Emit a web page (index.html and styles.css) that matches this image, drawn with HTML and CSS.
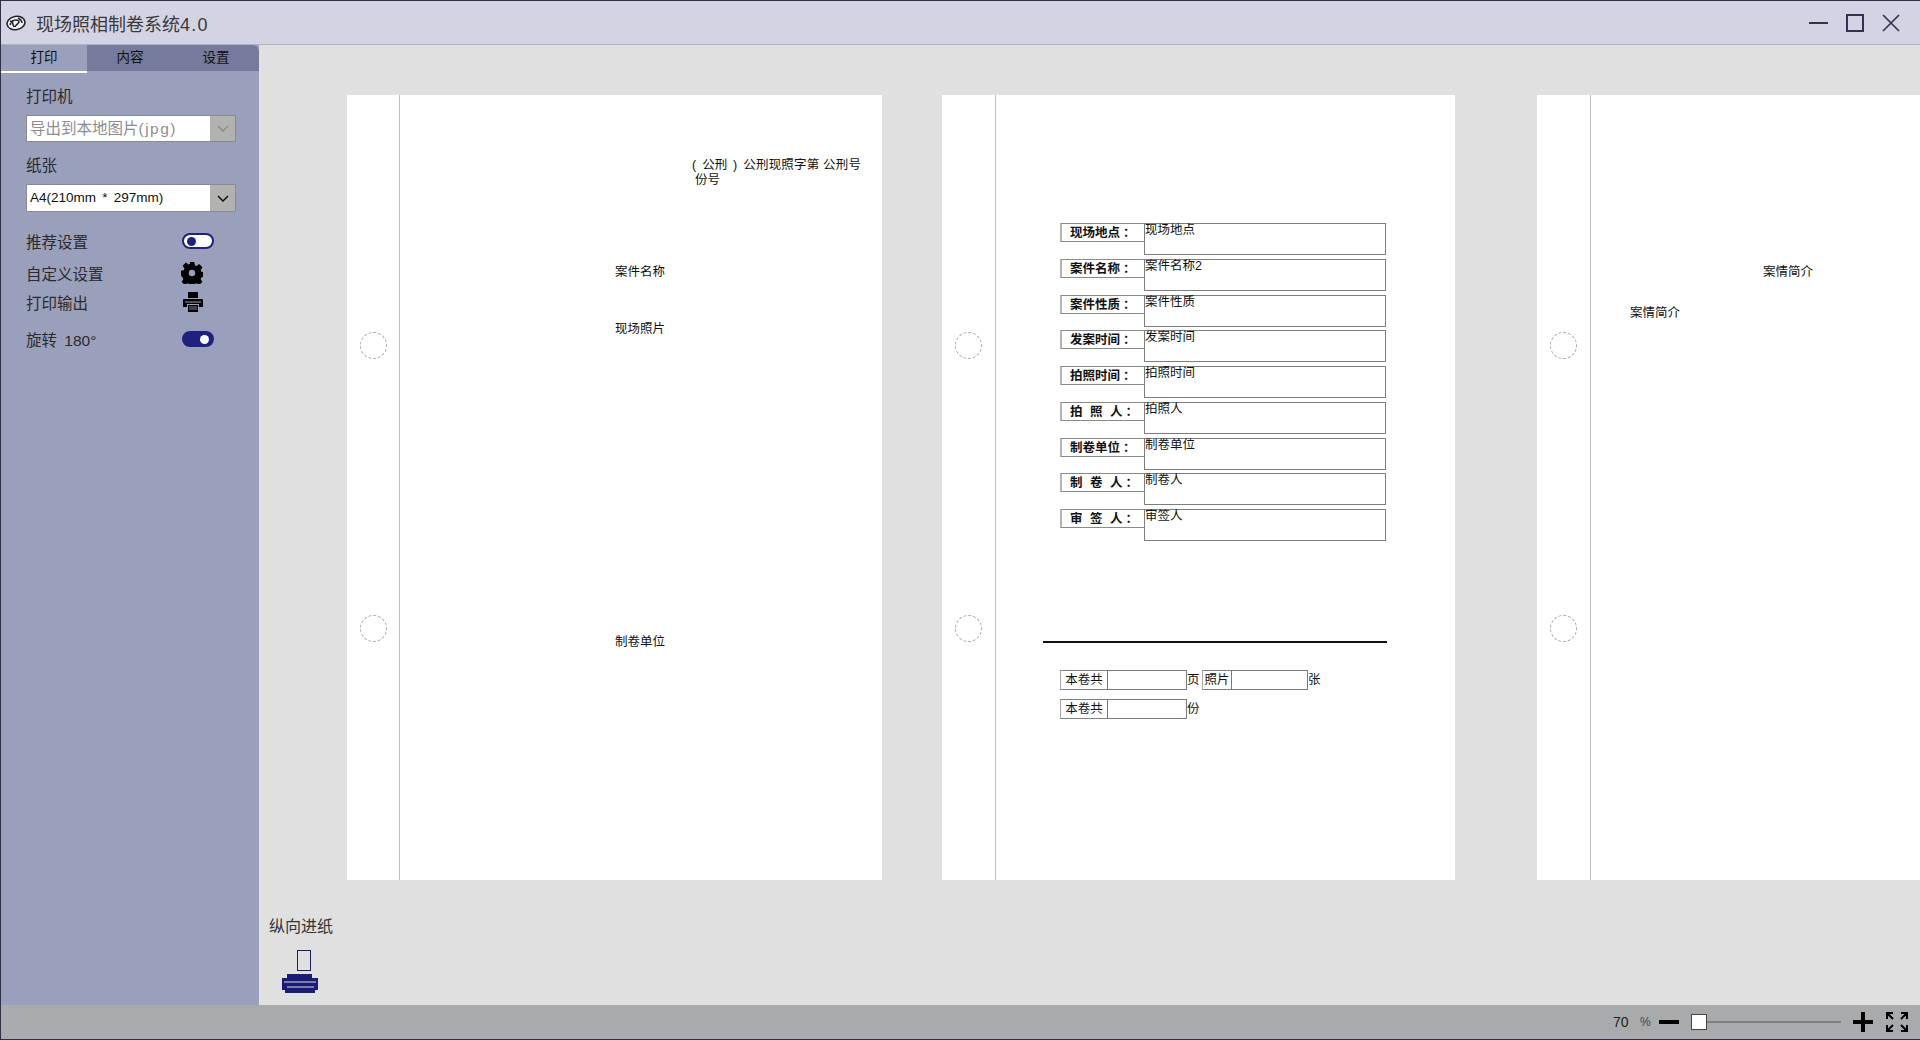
FILE: index.html
```html
<!DOCTYPE html>
<html lang="zh-CN">
<head>
<meta charset="utf-8">
<title>现场照相制卷系统4.0</title>
<link rel="stylesheet" href="styles.css">
</head>
<body>
<div class="window">
  <header class="titlebar">
    <svg class="logo" viewBox="0 0 20 16" width="20" height="16"><ellipse cx="10" cy="8" rx="9" ry="6.6" fill="#f4f4f8" stroke="#23232f" stroke-width="1.6" transform="rotate(-10 10 8)"/><path d="M4 10c1-5 6-6 9-4 1 2-3 3-4 6M12 3c2 1 4 2 4 5M7 5c-1 2 0 5 1 7M4 6l3 1" fill="none" stroke="#23232f" stroke-width="1.500"/></svg>
    <span class="app-title">现场照相制卷系统<span class="version">4.0</span></span>
    <div class="win-controls">
      <svg viewBox="0 0 19 18" width="19" height="18"><path d="M0 9h19" stroke="#33334f" stroke-width="2"/></svg>
      <svg viewBox="0 0 18 18" width="18" height="18"><rect x="1" y="1" width="16" height="16" fill="none" stroke="#33334f" stroke-width="2"/></svg>
      <svg viewBox="0 0 18 18" width="18" height="18"><path d="M1 1l16 16M17 1L1 17" stroke="#33334f" stroke-width="1.7"/></svg>
    </div>
  </header>
  <div class="content">
    <aside class="sidebar">
      <nav class="tabs">
        <div class="tab active">打印</div>
        <div class="tab">内容</div>
        <div class="tab last">设置</div>
      </nav>
      <div class="panel">
        <div class="field-label">打印机</div>
        <div class="combo disabled"><span class="combo-text">导出到本地图片<span class="ext">(jpg)</span></span><span class="combo-btn"><svg viewBox="0 0 12 7" width="12" height="7"><path d="M1 1l5 5 5-5" fill="none" stroke="#8a8a8a" stroke-width="1.3"/></svg></span></div>
        <div class="field-label second">纸张</div>
        <div class="combo"><span class="combo-text paper">A4(210mm * 297mm)</span><span class="combo-btn"><svg viewBox="0 0 12 7" width="12" height="7"><path d="M1 1l5 5 5-5" fill="none" stroke="#111" stroke-width="1.5"/></svg></span></div>
        <div class="opt first-opt"><span>推荐设置</span><span class="toggle off"><i></i></span></div>
        <div class="opt gear-opt"><span>自定义设置</span>
          <svg class="opt-icon" viewBox="0 0 24 24" width="22" height="22"><path fill="#000" fill-rule="evenodd" d="M9.500 0h5l.6 3.500 1.900.8 2.900-2 3.500 3.500-2 2.900.8 1.900 3.500.6v5l-3.500.6-.8 1.900 2 2.900-3.500 3.500-2.900-2-1.900.8-.6 3.500h-5l-.6-3.500-1.900-.8-2.900 2-3.500-3.500 2-2.900-.8-1.900L-.5 14.500v-5l3.500-.6.8-1.900-2-2.900 3.500-3.500 2.900 2 1.900-.8zM12 8.500a3.500 3.500 0 1 0 0 7 3.500 3.500 0 0 0 0-7z"/></svg>
        </div>
        <div class="opt print-opt"><span>打印输出</span>
          <svg class="opt-icon" viewBox="0 0 20 20" width="20" height="20"><path fill="#000" d="M5 0h10v6h-10zM1 7h18q1 0 1 1v7h-4v-3H4v3H0V8q0-1 1-1zM5 13h10v7H5z"/><path d="M2 10h16" stroke="#9a9fbc" stroke-width="1"/><path d="M6 15h8M6 17h8" stroke="#9a9fbc" stroke-width=".8"/></svg>
        </div>
        <div class="opt rotate-opt"><span>旋转 180°</span><span class="toggle on"><i></i></span></div>
      </div>
    </aside>
    <main class="main">
      <div class="canvas">
        <section class="page page-one">
          <div class="spine"><span class="hole"></span><span class="hole hole-two"></span></div>
          <div class="sheet">
            <div class="docno"><span class="wide">(&nbsp;公刑&nbsp;)&nbsp;</span><span class="fine">公刑现照字第 公刑号</span></div>
            <div class="docno indent">份号</div>
            <div class="cover-item item-name">案件名称</div>
            <div class="cover-item item-photo">现场照片</div>
            <div class="cover-item item-unit">制卷单位</div>
          </div>
        </section>
        <section class="page page-two">
          <div class="spine"><span class="hole"></span><span class="hole hole-two"></span></div>
          <div class="sheet">
            <div class="form">
              <div class="row"><div class="key">现场地点<span class="colon">：</span></div><div class="val">现场地点</div></div>
              <div class="row"><div class="key">案件名称<span class="colon">：</span></div><div class="val">案件名称2</div></div>
              <div class="row"><div class="key">案件性质<span class="colon">：</span></div><div class="val">案件性质</div></div>
              <div class="row"><div class="key">发案时间<span class="colon">：</span></div><div class="val">发案时间</div></div>
              <div class="row"><div class="key">拍照时间<span class="colon">：</span></div><div class="val">拍照时间</div></div>
              <div class="row"><div class="key"><span class="spaced">拍照</span>人<span class="colon">：</span></div><div class="val">拍照人</div></div>
              <div class="row"><div class="key">制卷单位<span class="colon">：</span></div><div class="val">制卷单位</div></div>
              <div class="row"><div class="key"><span class="spaced">制卷</span>人<span class="colon">：</span></div><div class="val">制卷人</div></div>
              <div class="row"><div class="key"><span class="spaced">审签</span>人<span class="colon">：</span></div><div class="val">审签人</div></div>
            </div>
            <hr class="rule">
            <div class="tally">
              <div class="cell-key">本卷共</div><div class="cell-val"></div><span class="unit">页</span>
              <div class="cell-key narrow">照片</div><div class="cell-val short"></div><span class="unit">张</span>
            </div>
            <div class="tally tally-two">
              <div class="cell-key">本卷共</div><div class="cell-val"></div><span class="unit">份</span>
            </div>
          </div>
        </section>
        <section class="page page-three">
          <div class="spine"><span class="hole"></span><span class="hole hole-two"></span></div>
          <div class="sheet">
            <div class="brief-title">案情简介</div>
            <div class="brief-body">案情简介</div>
          </div>
        </section>
      </div>
      <div class="feed">
        <div class="feed-label">纵向进纸</div>
        <svg class="feed-icon" viewBox="0 0 36 44" width="36" height="44"><rect x="15.500" y="0.500" width="13" height="20" fill="none" stroke="#1b1b78"/><path fill="#1b1b78" d="M5 24h25v4h6v12h-3v3H3v-3H0V28h5z"/><path d="M2 32h32M5 37h27" stroke="#e0e0e0" stroke-width="1"/></svg>
      </div>
    </main>
  </div>
  <footer class="statusbar">
    <span class="zoom-val">70</span><span class="zoom-pct">%</span>
    <svg class="minus" viewBox="0 0 20 4" width="20" height="4"><rect width="20" height="4" fill="#000"/></svg>
    <div class="slider"><span class="thumb"></span><span class="track"></span></div>
    <svg class="plus" viewBox="0 0 20 20" width="20" height="20"><path d="M0 10h20M10 0v20" stroke="#000" stroke-width="4"/></svg>
    <svg class="full" viewBox="0 0 22 20" width="22" height="20"><path d="M1 7V1h6M15 1h6v6M21 13v6h-6M7 19H1v-6M2 2l5 5M20 2l-5 5M20 18l-5-5M2 18l5-5" fill="none" stroke="#000" stroke-width="2"/></svg>
  </footer>
</div>
</body>
</html>
```
FILE: styles.css
```css
* { box-sizing: border-box; }
html, body { margin: 0; padding: 0; height: 100%; overflow: hidden; }
body { font-family: "Liberation Sans", "Noto Sans CJK SC", sans-serif; color: #000; }
.window { width: 1920px; height: 1040px; display: flex; flex-direction: column; border-top: 1px solid #2f2f45; border-left: 1px solid #2f2f45; border-bottom: 1px solid #2f2f45; overflow: hidden; }
.titlebar { height: 44px; flex: none; display: flex; align-items: center; background: #d3d3e3; border-bottom: 1px solid #b4b4c0; padding-left: 5px; }
.logo { flex: none; }
.app-title { margin-left: 10px; font-size: 18px; color: #3a3a3a; }
.version { letter-spacing: 1.300px; }
.win-controls { margin-left: auto; display: flex; align-items: center; gap: 18px; padding-right: 20px; }
.content { flex: 1; display: flex; min-height: 0; }
.sidebar { width: 258px; flex: none; background: #9a9fbc; }
.tabs { display: flex; height: 28px; background: #9a9fbc; }
.tab { width: 86px; height: 26px; background: #767a9c; font-size: 13.500px; line-height: 26px; text-align: center; color: #111; }
.tab.active { background: #9a9fbc; height: 28px; box-shadow: inset 0 -2px 0 #fff; }
.tab.last { border-top-right-radius: 7px; }
.panel { padding: 0 22px 0 25px; }
.field-label { font-size: 15.500px; line-height: 20px; color: #2b2b2b; margin-top: 14px; }
.combo { display: flex; width: 210px; height: 28px; margin-top: 8px; background: #fff; border: 1px solid #8a8a8f; font-size: 15.500px; }
.combo.disabled { height: 27px; }
.combo-text { flex: 1; padding-left: 3px; line-height: 25px; white-space: nowrap; color: #111; }
.combo-text.paper { font-size: 13.500px; word-spacing: 2.500px; }
.ext { letter-spacing: 1.500px; }
.combo.disabled .combo-text { color: #8d8d8d; }
.combo-btn { width: 25px; background: #b2b2b0; display: flex; align-items: center; justify-content: center; }
.opt { display: flex; align-items: center; justify-content: space-between; font-size: 15.500px; color: #2b2b2b; height: 20px; width: 188px; }
.opt.first-opt { margin-top: 19px; }
.opt.gear-opt { margin-top: 12px; }
.opt.print-opt { margin-top: 9px; }
.opt.rotate-opt { margin-top: 17px; word-spacing: 3px; }
.opt-icon { margin-right: 11px; }
.toggle { width: 32px; height: 16px; border-radius: 8px; display: flex; align-items: center; padding: 0 3px; border: 2px solid #1f2080; }
.toggle i { width: 9px; height: 9px; border-radius: 50%; display: block; }
.toggle.off { background: #fff; }
.toggle.off i { background: #1f2080; }
.toggle.on { background: #1f2080; justify-content: flex-end; }
.toggle.on i { background: #fff; }
.main { flex: 1; min-width: 0; background: #e0e0e0; display: flex; flex-direction: column; }
.canvas { height: 845px; flex: none; display: flex; align-items: flex-start; padding: 50px 0 0 88px; overflow: hidden; }
.page { height: 785px; flex: none; background: #fff; display: flex; font-size: 12.500px; line-height: 15px; color: #111; }
.page-one { width: 535px; margin-right: 60px; }
.page-two { width: 513px; margin-right: 82px; margin-left: 0; }
.page-three { width: 535px; }
.spine { width: 53px; flex: none; border-right: 1px solid #bdbdbd; display: flex; flex-direction: column; align-items: center; padding: 237px 0 0 1px; }
.page-two .spine, .page-three .spine { width: 54px; padding-left: 0; }
.hole { width: 27px; height: 27px; border-radius: 50%; border: 1px dashed #a8a8a8; display: block; }
.hole-two { margin-top: 256px; }
.sheet { flex: 1; min-width: 0; }
.docno { margin-left: 292px; white-space: nowrap; }
.wide { word-spacing: 2.500px; }
.fine { letter-spacing: .2px; }
.page-one .sheet { padding-top: 63px; }
.docno.indent { margin-left: 295px; }
.cover-item { margin-left: 215px; }
.item-name { margin-top: 77px; }
.item-photo { margin-top: 42px; }
.item-unit { margin-top: 298px; }
.form { padding: 128px 0 0 64px; display: flex; flex-direction: column; gap: 3.750px; }
.row { display: flex; height: 32px; align-items: flex-start; }
.key { width: 84px; height: 19px; border: 1px solid #8a8a8a; border-left: 2px solid #b4b4b4; border-right: 0; font-size: 12.500px; font-weight: 700; line-height: 18px; padding-left: 8px; white-space: nowrap; }
.colon { margin-left: 3px; }
.spaced { letter-spacing: 7.500px; }
.val { width: 242px; height: 32px; border: 1px solid #7d7d7d; line-height: 13px; white-space: nowrap; }
.rule { margin: 100px 0 0 47px; width: 344px; height: 2px; background: #111; border: 0; }
.tally { display: flex; align-items: center; height: 20px; margin: 27px 0 0 64px; }
.tally-two { margin-top: 9px; }
.cell-key { width: 47px; height: 20px; border: 1px solid #808080; border-left-color: #aaa; border-right: 0; text-align: center; line-height: 18px; }
.cell-key.narrow { width: 29px; }
.cell-val { width: 80px; height: 20px; border: 1px solid #7a7a7a; }
.cell-val.short { width: 77px; }
.unit { width: 15px; text-align: left; }
.brief-title { margin: 170px 0 0 172px; }
.brief-body { margin: 26px 0 0 39px; }
.feed { flex: 1; min-height: 0; padding: 27px 0 0 10px; }
.feed-label { font-size: 16px; line-height: 20px; color: #333; }
.feed-icon { display: block; margin: 13px 0 0 13px; }
.statusbar { height: 34px; flex: none; background: #a9aaac; display: flex; align-items: center; padding-left: 1612px; }
.zoom-val { font-size: 14px; color: #222; width: 27px; }
.zoom-pct { font-size: 12px; color: #445; width: 19px; }
.slider { width: 150px; height: 16px; margin-left: 12px; display: flex; align-items: center; }
.thumb { width: 16px; height: 16px; background: #fff; border: 1px solid #444; flex: none; }
.track { flex: 1; height: 2px; background: #808080; }
.plus { margin-left: 12px; }
.full { margin-left: 13px; }
```
